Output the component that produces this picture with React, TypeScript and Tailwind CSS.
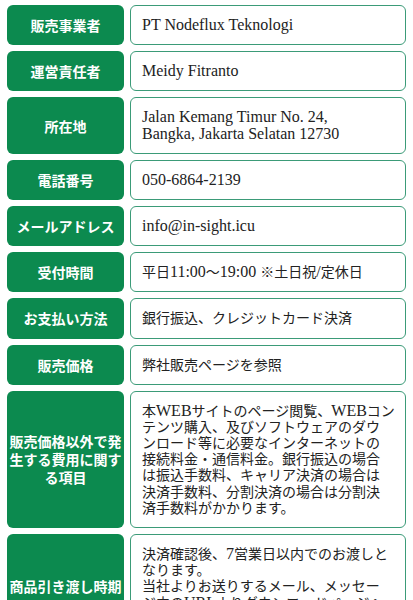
const rows: { label: string; lines: string[] }[] = [
  { label: '販売事業者', lines: ['PT Nodeflux Teknologi'] },
  { label: '運営責任者', lines: ['Meidy Fitranto'] },
  { label: '所在地', lines: ['Jalan Kemang Timur No. 24,', 'Bangka, Jakarta Selatan 12730'] },
  { label: '電話番号', lines: ['050-6864-2139'] },
  { label: 'メールアドレス', lines: ['info@in-sight.icu'] },
  { label: '受付時間', lines: ['平日11:00〜19:00 ※土日祝/定休日'] },
  { label: 'お支払い方法', lines: ['銀行振込、クレジットカード決済'] },
  { label: '販売価格', lines: ['弊社販売ページを参照'] },
  {
    label: '販売価格以外で発生する費用に関する項目',
    lines: [
      '本WEBサイトのページ閲覧、WEBコン',
      'テンツ購入、及びソフトウェアのダウ',
      'ンロード等に必要なインターネットの',
      '接続料金・通信料金。銀行振込の場合',
      'は振込手数料、キャリア決済の場合は',
      '決済手数料、分割決済の場合は分割決',
      '済手数料がかかります。',
    ],
  },
  {
    label: '商品引き渡し時期',
    lines: [
      '決済確認後、7営業日以内でのお渡しと',
      'なります。',
      '当社よりお送りするメール、メッセー',
      'ジ内のURLよりダウンロードページへ',
      'アクセスしてください。',
    ],
  },
]

// latin runs get the wider serif at 16px, japanese stays at 14px
function Mixed({ text }: { text: string }) {
  const parts = text.split(/([\x00-\x7F]+)/).filter(Boolean)
  return (
    <>
      {parts.map((p, i) =>
        /^[\x00-\x7F]+$/.test(p) ? (
          <span key={i} className="text-[16px]">
            {p}
          </span>
        ) : (
          <span key={i} className="text-[14px]">
            {p}
          </span>
        )
      )}
    </>
  )
}

export default function App() {
  return (
    <div className="min-h-screen bg-white px-[7px] pt-[5px] pb-4">
      <div className="flex flex-col gap-[6px]">
        {rows.map((row) => (
          <div key={row.label} className="grid grid-cols-[117px_1fr] gap-x-[6px]">
            <div
              className="flex items-center justify-center rounded-[6px] bg-[#0c8a4f] px-[2px] text-center text-[14px] font-bold leading-[18px] text-white"
              style={{ fontFamily: '"Noto Sans CJK JP", sans-serif' }}
            >
              {row.label}
            </div>
            <div
              className="flex flex-col justify-center rounded-[6px] border-[1.5px] border-[#3b9b78] py-[11px] pl-[11px] pr-[4px] leading-[16px] text-[#222]"
              style={{ fontFamily: '"Liberation Serif", "Noto Sans CJK JP", serif' }}
            >
              {row.lines.map((line, i) => (
                <div key={i} className="h-[16.2px] whitespace-nowrap">
                  <Mixed text={line} />
                </div>
              ))}
            </div>
          </div>
        ))}
      </div>
    </div>
  )
}
